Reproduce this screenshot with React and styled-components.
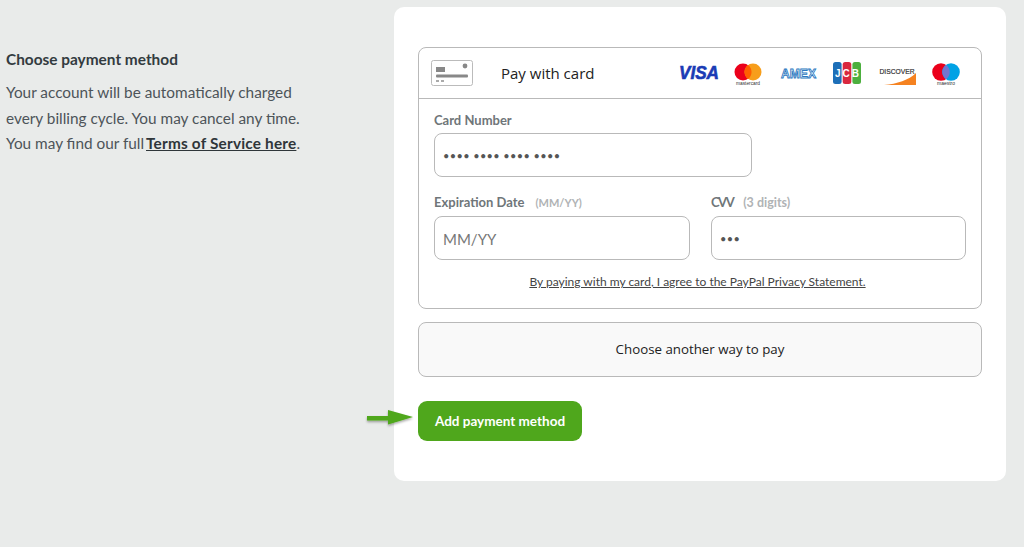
import React from "react";
import styled, { createGlobalStyle } from "styled-components";

const Global = createGlobalStyle`
  html, body { margin: 0; padding: 0; background: #e9ebea; }
  body { font-family: "Noto Sans", "Open Sans", sans-serif; overflow: hidden; }
  * { box-sizing: border-box; }
`;
const Page = styled.div`
  display: flex; width: 1024px; height: 547px; padding: 7px 18px 0 6px;
`;
const Intro = styled.section`
  width: 388px; flex: none; padding-top: 40px; color: #4d5459;
  font-family: "Lato", sans-serif; font-size: 15.35px; line-height: 25.5px;
`;
const IntroTitle = styled.h2`
  margin: 0 0 9px; font-size: 15.4px; line-height: 24px; font-weight: 700; color: #333b40;
`;
const IntroText = styled.p`margin: 0; white-space: nowrap;`;
const TermsLink = styled.a`margin-left: -2px; color: #2f363a; font-weight: 700; letter-spacing: .2px; text-decoration: underline;`;
const Card = styled.main`
  width: 612px; height: 474px; flex: none; background: #fff; border-radius: 10px; padding: 40px 24px 0;
`;
const PayBox = styled.div`
  height: 262px; border: 1px solid #b9b9b9; border-radius: 8px;
`;
const PayHeader = styled.div`
  height: 51px; display: flex; align-items: center; border-bottom: 1px solid #b9b9b9; padding: 0 21px 0 12px;
`;
const PayTitle = styled.span`
  margin-left: 28px; font-family: "Open Sans", sans-serif; font-size: 15px; color: #222;
`;
const Brands = styled.div`margin-left: auto; display: flex; align-items: center;`;
const Brand = styled.span`display: flex; margin-left: ${p => p.$gap || 0}px;`;
const Form = styled.div`padding: 11px 15px 0;`;
const Label = styled.label`
  display: block; height: 20px; font-family: "Lato", sans-serif; font-size: 13px; line-height: 20px; font-weight: 700; color: #6f7679; white-space: nowrap;
  letter-spacing: ${p => p.$ls || 0}px;
`;
const Hint = styled.span`margin-left: ${p => p.$gap}px; font-size: ${p => p.$size}px; letter-spacing: 0; color: #b0b3b5;`;
const Input = styled.div`
  display: flex; align-items: center; margin-top: ${p => p.$top}px; height: 44px; width: ${p => p.$w}px; padding: ${p => p.$muted ? 1 : 0}px 0 0 8px;
  border: 1px solid #b9b9b9; border-radius: 8px; background: #fff;
  color: ${p => p.$muted ? "#777" : "#555"};
  font-family: "Lato", sans-serif; font-size: ${p => p.$size}px; letter-spacing: ${p => p.$ls || 0}px;
`;
const Row = styled.div`display: flex; gap: 21px; margin-top: 15px;`;
const Legal = styled.a`
  display: block; margin: 12px 5px 0 0; text-align: center; font-family: "Lato", sans-serif; font-size: 12px; line-height: 20px; color: #444; text-decoration: underline;
`;
const OtherWay = styled.div`
  display: flex; align-items: center; justify-content: center; margin-top: 13px; height: 55px; padding-bottom: 2px;
  background: #f9f9f9; border: 1px solid #b9b9b9; border-radius: 8px;
  font-family: "Open Sans", sans-serif; font-size: 13.3px; color: #222;
`;
const ButtonWrap = styled.div`position: relative; margin-top: 24px; width: 164px;`;
const Button = styled.button`
  display: block; width: 164px; height: 40px; padding: 0 0 1px; background: #4fa71c; border: 0; border-radius: 9px; color: #fff;
  font-family: "Lato", sans-serif; font-size: 13.5px; font-weight: 700;
`;
const Arrow = styled.svg`position: absolute; left: -51px; top: 4px; overflow: visible;`;

const CardIcon = () => (
  <svg width="42" height="26" viewBox="0 0 42 26">
    <rect x=".5" y=".5" width="41" height="25" rx="2" fill="#fff" stroke="#bbb" />
    <rect x="5" y="7" width="9" height="5" fill="#888" />
    <circle cx="34" cy="6" r="2.4" fill="#888" />
    <rect x="5" y="14.500" width="32" height="3" rx="1" fill="#888" />
    <rect x="5" y="20" width="3" height="2" fill="#aaa" />
    <rect x="10" y="20" width="3" height="2" fill="#aaa" />
  </svg>
);
const Visa = () => (
  <svg width="41" height="20" viewBox="0 0 41 20">
    <text x="0" y="16" fontFamily="Liberation Sans" fontWeight="700" fontStyle="italic" fontSize="18" fill="#1a3bb5" stroke="#1a3bb5" strokeWidth=".6" textLength="40" lengthAdjust="spacingAndGlyphs">VISA</text>
  </svg>
);
const Master = () => (
  <svg width="28" height="24" viewBox="0 0 28 24">
    <circle cx="9" cy="11" r="8.500" fill="#eb001b" />
    <circle cx="19" cy="11" r="8.500" fill="#f79e1b" />
    <path d="M14 4.100a8.500 8.500 0 0 1 0 13.800a8.500 8.500 0 0 1 0-13.800z" fill="#ff5f00" />
    <text x="14" y="23.500" textAnchor="middle" fontSize="4.800" fontFamily="Liberation Sans" fill="#333">mastercard</text>
  </svg>
);
const Amex = () => (
  <svg width="37" height="14" viewBox="0 0 37 14">
    <text x="18.500" y="11.500" textAnchor="middle" fontSize="13" fontWeight="700" fontFamily="Liberation Sans" fill="#fff" stroke="#2a78c0" strokeWidth=".9" textLength="35" lengthAdjust="spacingAndGlyphs">AMEX</text>
  </svg>
);
const Jcb = () => (
  <svg width="28" height="22" viewBox="0 0 28 22">
    <rect x="0" y="0" width="8.600" height="22" rx="2.500" fill="#1d6fb8" />
    <rect x="9.700" y="0" width="8.600" height="22" rx="2.500" fill="#d9283f" />
    <rect x="19.400" y="0" width="8.600" height="22" rx="2.500" fill="#4caf3e" />
    <text x="14" y="15" textAnchor="middle" fontSize="10" fontWeight="700" fontFamily="Liberation Sans" fill="#fff" textLength="24">JCB</text>
  </svg>
);
const Discover = () => (
  <svg width="37" height="24" viewBox="0 0 37 24">
    <path d="M37 12v12H5C18 23 30 19 37 12z" fill="#f58220" />
    <text x=".5" y="13" fontSize="7.500" fontFamily="Liberation Sans" fill="#333" stroke="#333" strokeWidth=".2" textLength="35" lengthAdjust="spacingAndGlyphs">DISCOVER</text>
  </svg>
);
const Maestro = () => (
  <svg width="28" height="24" viewBox="0 0 28 24">
    <circle cx="9" cy="11" r="8.800" fill="#eb001b" />
    <circle cx="19" cy="11" r="8.800" fill="#00a2e5" />
    <path d="M14 3.800a8.800 8.800 0 0 1 0 14.400a8.800 8.800 0 0 1 0-14.400z" fill="#7375cf" />
    <text x="14" y="23.500" textAnchor="middle" fontSize="5" fontFamily="Liberation Sans" fill="#333">maestro</text>
  </svg>
);

export default function App() {
  return (
    <Page>
      <Global />
      <Intro>
        <IntroTitle>Choose payment method</IntroTitle>
        <IntroText>Your account will be automatically charged</IntroText>
        <IntroText>every billing cycle. You may cancel any time.</IntroText>
        <IntroText>You may find our full <TermsLink>Terms of Service here</TermsLink>.</IntroText>
      </Intro>
      <Card>
        <PayBox>
          <PayHeader>
            <CardIcon />
            <PayTitle>Pay with card</PayTitle>
            <Brands>
              <Brand><Visa /></Brand>
              <Brand $gap={14}><Master /></Brand>
              <Brand $gap={18}><Amex /></Brand>
              <Brand $gap={16}><Jcb /></Brand>
              <Brand $gap={18}><Discover /></Brand>
              <Brand $gap={16}><Maestro /></Brand>
            </Brands>
          </PayHeader>
          <Form>
            <Label>Card Number</Label>
            <Input $w={318} $top={3} $size={11} $ls={0.36}>•••• •••• •••• ••••</Input>
            <Row>
              <div>
                <Label>Expiration Date<Hint $gap={11} $size={11}>(MM/YY)</Hint></Label>
                <Input $w={256} $top={4} $size={15} $muted>MM/YY</Input>
              </div>
              <div>
                <Label $ls={-1.5}>CVV<Hint $gap={10} $size={12.5}>(3 digits)</Hint></Label>
                <Input $w={255} $top={4} $size={11} $ls={0.36}>•••</Input>
              </div>
            </Row>
            <Legal>By paying with my card, I agree to the PayPal Privacy Statement.</Legal>
          </Form>
        </PayBox>
        <OtherWay>Choose another way to pay</OtherWay>
        <ButtonWrap>
          <Arrow width="48" height="20" viewBox="0 0 48 20">
            <defs>
              <filter id="s" x="-20%" y="-50%" width="140%" height="200%">
                <feDropShadow dx="0" dy="1.5" stdDeviation="1.2" floodColor="#000" floodOpacity=".35" />
              </filter>
            </defs>
            <path d="M0 11h21V5l25 7-25 7.500V15.500H0z" fill="#4fa71c" filter="url(#s)" />
          </Arrow>
          <Button>Add payment method</Button>
        </ButtonWrap>
      </Card>
    </Page>
  );
}
